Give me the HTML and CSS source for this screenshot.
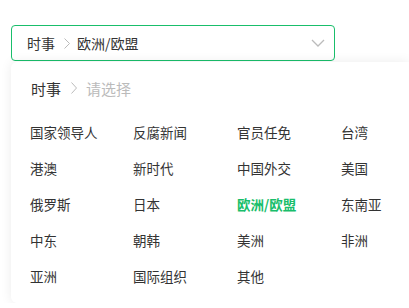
FILE: index.html
```html
<!DOCTYPE html>
<html lang="zh-CN">
<head>
    <meta charset="UTF-8">
    <meta name="viewport" content="width=device-width, initial-scale=1">
    <title>Cascader</title>
    <link rel="stylesheet" href="styles.css">
</head>
<body>
<div class="cascader">
    <div class="cascader-input">
        <span class="crumb">时事</span>
        <svg class="sep" width="6" height="11" viewBox="0 0 6 11">
            <path d="M0.5 0.5 L5.5 5.5 L0.5 10.5" fill="none" stroke="#bbb" stroke-width="1"/>
        </svg>
        <span class="crumb">欧洲/欧盟</span>
        <svg class="chevron" width="14" height="8" viewBox="0 0 14 8">
            <path d="M1 1 L7 7 L13 1" fill="none" stroke="#bbb" stroke-width="1.3"/>
        </svg>
    </div>

    <div class="cascader-panel">
        <div class="panel-head">
            <span class="crumb">时事</span>
            <svg class="sep" width="6" height="12" viewBox="0 0 6 12">
                <path d="M0.5 0.5 L5.5 6 L0.5 11.5" fill="none" stroke="#bbb" stroke-width="1"/>
            </svg>
            <span class="placeholder">请选择</span>
        </div>
        <ul class="options">
            <li>国家领导人</li>
            <li>反腐新闻</li>
            <li>官员任免</li>
            <li>台湾</li>
            <li>港澳</li>
            <li>新时代</li>
            <li>中国外交</li>
            <li>美国</li>
            <li>俄罗斯</li>
            <li>日本</li>
            <li class="active">欧洲/欧盟</li>
            <li>东南亚</li>
            <li>中东</li>
            <li>朝韩</li>
            <li>美洲</li>
            <li>非洲</li>
            <li>亚洲</li>
            <li>国际组织</li>
            <li>其他</li>
        </ul>
    </div>
</div>
</body>
</html>
```

FILE: styles.css
```css
:root {
    --primary-color: #19be6b;
    --text-color: #333;
    --muted-color: #bbb;
}

* {
    box-sizing: border-box;
}

body {
    margin: 0;
    background: #fff;
    font-family: "Noto Sans CJK SC", "Noto Sans", sans-serif;
    color: var(--text-color);
    overflow: hidden;
}

.cascader {
    padding: 25px 0 0 11px;
}

/* Trigger box */
.cascader-input {
    width: 324px;
    height: 36px;
    border: 1px solid var(--primary-color);
    border-radius: 4px;
    display: flex;
    align-items: center;
    padding: 0 0 0 15px;
    font-size: 14px;
}

.cascader-input .sep {
    margin: 0 7px 0 9px;
}

.chevron {
    margin-left: auto;
    margin-right: 9px;
}

/* Dropdown panel */
.cascader-panel {
    margin-top: 1px;
    background: #fff;
    border-radius: 6px 0 0 6px;
    box-shadow: 0 0 12px rgba(0, 0, 0, 0.08);
    height: 241px;
    padding: 0 0 0 19px;
}

.panel-head {
    display: flex;
    align-items: center;
    height: 52px;
    padding-left: 1px;
    font-size: 15px;
}

.panel-head .sep {
    margin: 0 9px 0 10px;
}

.placeholder {
    color: var(--muted-color);
}

.options {
    list-style: none;
    margin: 0;
    padding: 0;
    display: grid;
    grid-template-columns: 103px 104px 104px auto;
    grid-auto-rows: 36px;
    font-size: 13.5px;
}

.options li {
    line-height: 36px;
    white-space: nowrap;
}

.options li.active {
    color: var(--primary-color);
    font-weight: bold;
}
```
